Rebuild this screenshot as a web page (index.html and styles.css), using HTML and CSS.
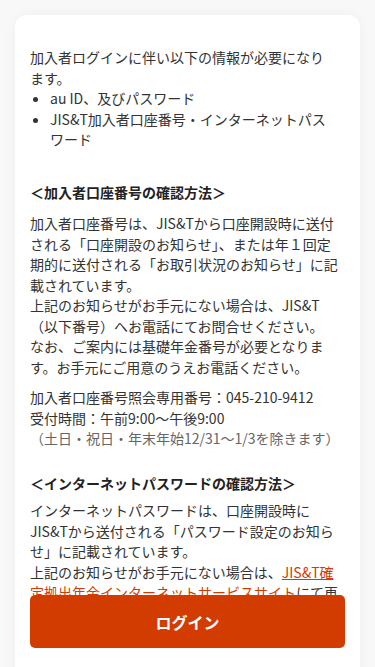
FILE: index.html
```html
<!DOCTYPE html>
<html lang="ja">
<head>
  <meta charset="UTF-8" />
  <meta name="viewport" content="width=device-width, initial-scale=1.0"/>
  <title>加入者ログイン</title>
  <link rel="stylesheet" href="styles.css">
</head>
<body>
  <div class="card">
    <div class="intro">
      <p>加入者ログインに伴い以下の情報が必要になります。</p>
      <ul>
        <li>au ID、及びパスワード</li>
        <li>JIS&amp;T加入者口座番号・インターネットパスワード</li>
      </ul>
    </div>

    <h2 class="section-title">＜加入者口座番号の確認方法＞</h2>
    <p>加入者口座番号は、JIS&amp;Tから口座開設時に送付される「口座開設のお知らせ」、または年１回定期的に送付される「お取引状況のお知らせ」に記載されています。<br>上記のお知らせがお手元にない場合は、JIS&amp;T（以下番号）へお電話にてお問合せください。<br>なお、ご案内には基礎年金番号が必要となります。お手元にご用意のうえお電話ください。</p>
    <p class="contact">
      加入者口座番号照会専用番号：045-210-9412<br>
      受付時間：午前9:00〜午後9:00<br>
      <span class="note">（土日・祝日・年末年始12/31〜1/3を除きます）</span>
    </p>

    <h2 class="section-title second">＜インターネットパスワードの確認方法＞</h2>
    <p>インターネットパスワードは、口座開設時にJIS&amp;Tから送付される「パスワード設定のお知らせ」に記載されています。<br>上記のお知らせがお手元にない場合は、<a href="#">JIS&amp;T確定拠出年金インターネットサービスサイト</a>にて再発行のお手続きをお願いいたします。</p>
  </div>

  <div class="footer">
    <button class="login-btn">ログイン</button>
  </div>
</body>
</html>
```

FILE: styles.css
```css
* {
  box-sizing: border-box;
  margin: 0;
  padding: 0;
}
body {
  font-family: 'Noto Sans CJK JP', 'Noto Sans', sans-serif;
  font-size: 14px;
  line-height: 20.5px;
  color: #333;
  background-color: #f8f8f8;
  padding: 15px 15px 0;
}
.card {
  background: #fff;
  border-radius: 12px;
  box-shadow: 0 0 14px rgba(0,0,0,0.04);
  padding: 32px 20px 110px 15px;
}
.intro {
  padding-right: 7px;
}
.intro ul {
  padding-left: 20px;
}
.section-title {
  font-size: 14px;
  font-weight: bold;
  color: #222;
  margin-top: 32px;
  margin-bottom: 11px;
}
.section-title.second {
  margin-top: 24px;
  margin-bottom: 7px;
}
.contact {
  margin-top: 10px;
}
.note {
  color: #666;
}
a {
  color: #d23c00;
}
.footer {
  position: fixed;
  left: 15px;
  right: 15px;
  bottom: 0;
  background: #fff;
  padding: 0 15px 19px;
}
.login-btn {
  display: block;
  width: 100%;
  height: 53px;
  border: none;
  border-radius: 5px;
  background-color: #d23c00;
  color: #fff;
  font-family: 'Noto Sans CJK JP', sans-serif;
  font-size: 16px;
  font-weight: bold;
  cursor: pointer;
}
```
